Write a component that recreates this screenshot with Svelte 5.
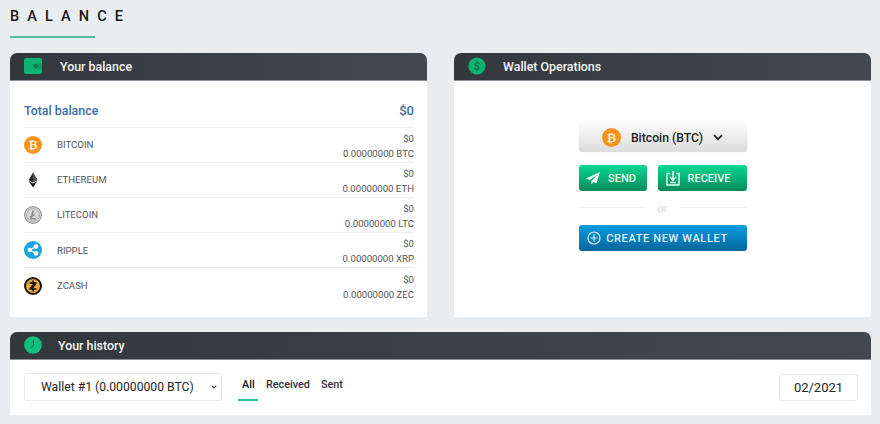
<script lang="ts">
	const coins = [
		{ name: 'BITCOIN', sym: 'BTC' },
		{ name: 'ETHEREUM', sym: 'ETH' },
		{ name: 'LITECOIN', sym: 'LTC' },
		{ name: 'RIPPLE', sym: 'XRP' },
		{ name: 'ZCASH', sym: 'ZEC' }
	];
</script>

{#snippet btc(size)}
	<svg width={size} height={size} viewBox="0 0 18 18">
		<circle cx="9" cy="9" r="9" fill="#f7931a" />
		<text x="9" y="13" text-anchor="middle" class="btc-mark">₿</text>
	</svg>
{/snippet}

<div class="page">
	<h1>BALANCE</h1>
	<div class="rule"></div>

	<div class="columns">
		<section class="card">
			<header>
				<svg class="head-icon" width="18" height="16" viewBox="0 0 18 16">
					<rect x="0" y="0" width="18" height="16" rx="2" fill="#0cb472" />
					<path d="M11 5.2h7v5.6h-7a2.8 2.8 0 0 1 0-5.6z" fill="#0a9f65" />
					<circle cx="12" cy="8" r="1.5" fill="none" stroke="#3a4148" stroke-width="0.8" />
				</svg>
				<h2 class="h-balance">Your balance</h2>
			</header>
			<div class="balance-body">
				<div class="total"><span>Total balance</span><span>$0</span></div>
				{#each coins as c}
					<div class="coin">
						<span class="coin-icon">
							{#if c.sym === 'BTC'}
								{@render btc(18)}
							{:else if c.sym === 'ETH'}
								<svg width="18" height="18" viewBox="0 0 18 18">
									<path d="M9 1.5 4.6 9 9 11.6 13.4 9z" fill="#2b2b2b" />
									<path d="M9 1.5V11.6L13.4 9z" fill="#555" />
									<path d="M4.6 9.9 9 16.5l4.4-6.6L9 12.5z" fill="#1a1a1a" />
								</svg>
							{:else if c.sym === 'LTC'}
								<svg width="18" height="18" viewBox="0 0 18 18">
									<circle cx="9" cy="9" r="8.4" fill="#d6d6d6" stroke="#8a8a8a" stroke-width="1" />
									<circle cx="9" cy="9" r="6.4" fill="none" stroke="#a5a5a5" stroke-width="0.8" />
									<path d="M8.2 4.4h2L9 9l1.9-.7-.4 1.3-1.9.7-.5 1.8h4.3l-.4 1.5H5.9l.8-2.7-1.3.5.3-1.2 1.4-.5z" fill="#8c8c8c" />
								</svg>
							{:else if c.sym === 'XRP'}
								<svg width="18" height="18" viewBox="0 0 18 18">
									<circle cx="9" cy="9" r="9" fill="#1ba5e6" />
									<path d="M6 9l6-3.4M6 9l6 3.4" stroke="#fff" stroke-width="1.2" />
									<circle cx="5.8" cy="9" r="2.3" fill="#fff" />
									<circle cx="12" cy="5.6" r="2.3" fill="#fff" />
									<circle cx="12" cy="12.4" r="2.3" fill="#fff" />
								</svg>
							{:else}
								<svg width="18" height="18" viewBox="0 0 18 18">
									<circle cx="9" cy="9" r="8" fill="#e8a93a" stroke="#17130c" stroke-width="2" />
									<path d="M8.2 3.6h1.6v1.7h2.7v1.6L9 11.2h3.5v1.6H9.8v1.6H8.2v-1.6H5.5v-1.6L9 6.9H5.6V5.3h2.6z" fill="#17130c" />
								</svg>
							{/if}
						</span>
						<span class="coin-name">{c.name}</span>
						<span class="coin-amount">
							<span>$0</span>
							<span>0.00000000 {c.sym}</span>
						</span>
					</div>
				{/each}
			</div>
		</section>

		<section class="card">
			<header>
				<svg class="head-icon" width="18" height="18" viewBox="0 0 18 18">
					<circle cx="9" cy="9" r="8.6" fill="#0cb472" />
					<text x="9" y="12.6" text-anchor="middle" class="dollar">$</text>
				</svg>
				<h2 class="h-wallet">Wallet Operations</h2>
			</header>
			<div class="ops-body">
				<div class="ops">
					<div class="coin-select">
						{@render btc(19)}
						<span>Bitcoin (BTC)</span>
						<svg width="10" height="7" viewBox="0 0 10 7">
							<path d="M1 1.2 5 5.2l4-4" fill="none" stroke="#222" stroke-width="1.7" />
						</svg>
					</div>
					<div class="pair">
						<div class="btn green send">
							<svg width="14" height="13" viewBox="0 0 14 13">
								<path d="M14 0 0 6.4l3.8 1.7L11 3 5.4 9v3.6l2.2-2.6 2.8 1.4z" fill="#e6fff4" />
							</svg>
							SEND
						</div>
						<div class="btn green receive">
							<svg width="14" height="15" viewBox="0 0 14 15">
								<path d="M4 2.5H1v11.5h12V2.5h-3" fill="none" stroke="#e6fff4" stroke-width="1.4" />
								<path d="M7 0v8M4 6l3 3.2L10 6M4 11.4h6" fill="none" stroke="#e6fff4" stroke-width="1.5" />
							</svg>
							RECEIVE
						</div>
					</div>
					<div class="or"><i></i><span>or</span><i></i></div>
					<div class="btn blue">
						<svg width="14" height="14" viewBox="0 0 14 14">
							<circle cx="7" cy="7" r="6" fill="none" stroke="#dff3ff" stroke-width="1.2" />
							<path d="M7 3.6v6.8M3.6 7h6.8" stroke="#dff3ff" stroke-width="1.2" />
						</svg>
						CREATE NEW WALLET
					</div>
				</div>
			</div>
		</section>
	</div>

	<section class="card history">
		<header>
			<svg class="head-icon" width="18" height="18" viewBox="0 0 18 18">
				<circle cx="9" cy="9" r="8.8" fill="#12bf7c" />
				<path d="M9.3 4v5.6L6.6 12" fill="none" stroke="#24524a" stroke-width="0.9" />
			</svg>
			<h2 class="h-history">Your history</h2>
		</header>
		<div class="history-body">
			<div class="wallet-select">
				<span>Wallet #1 (0.00000000 BTC)</span>
				<svg width="6" height="4" viewBox="0 0 8 5">
					<path d="M1 .8 4 3.8 7 .8" fill="none" stroke="#333" stroke-width="1.4" />
				</svg>
			</div>
			<nav>
				<span class="active">All</span>
				<span>Received</span>
				<span>Sent</span>
			</nav>
			<div class="date">02/2021</div>
		</div>
	</section>
</div>

<style>
	:global(body) {
		margin: 0;
		background: #e9edf0;
		font-family: Roboto, 'Liberation Sans', sans-serif;
	}

	.page {
		width: 880px;
		height: 424px;
		padding: 9px 9px 0 10px;
		box-sizing: border-box;
		overflow: hidden;
	}

	h1 {
		margin: 0;
		font-size: 14.5px;
		line-height: 15px;
		font-weight: 500;
		letter-spacing: 8.1px;
		color: #15181b;
	}

	.rule {
		width: 85px;
		height: 1.5px;
		margin-top: 12px;
		margin-bottom: 15px;
		background: #55bd9c;
	}

	.columns {
		display: grid;
		grid-template-columns: 417px 417px;
		column-gap: 27px;
	}

	.card {
		background: #fff;
		border-radius: 7px 7px 0 0;
	}

	header {
		display: flex;
		align-items: center;
		height: 28px;
		background: linear-gradient(90deg, #33383d, #414950);
		border-radius: 7px 7px 0 0;
		border-bottom: 1px solid #8a9196;
		box-sizing: border-box;
	}

	.head-icon {
		margin-left: 14px;
		flex: none;
	}

	h2 {
		margin: 0;
		font-size: 12.4px;
		font-weight: 500;
		color: #f2f4f5;
	}

	.h-balance {
		margin-left: 18px;
	}

	.h-wallet {
		margin-left: 17px;
	}

	.h-history {
		margin-left: 16px;
	}

	.balance-body {
		height: 236px;
		padding: 0 13px 0 14px;
		box-sizing: border-box;
	}

	.total {
		display: flex;
		justify-content: space-between;
		align-items: center;
		height: 47px;
		padding-top: 13px;
		font-size: 12.4px;
		font-weight: 500;
		color: #3a6ea5;
		border-bottom: 1px solid #ececec;
		box-sizing: border-box;
	}

	.total span:last-child {
		font-size: 13px;
	}

	.coin {
		display: flex;
		align-items: center;
		height: 35.2px;
		border-bottom: 1px solid #ececec;
		box-sizing: border-box;
		font-size: 9.6px;
		color: #555;
	}

	.coin:last-child {
		border-bottom: 0;
	}

	.coin-icon {
		display: flex;
		width: 33px;
	}

	.coin-name {
		flex: 1;
	}

	.coin-amount {
		display: flex;
		flex-direction: column;
		align-items: flex-end;
		gap: 2px;
		line-height: 13px;
		padding-top: 2px;
	}

	.btc-mark {
		font-family: 'DejaVu Sans', sans-serif;
		font-size: 11px;
		font-weight: 700;
		fill: #fff;
		opacity: 0.85;
	}

	.dollar {
		font-size: 11px;
		font-weight: 700;
		fill: #0a6f49;
	}

	.ops-body {
		height: 236px;
		display: flex;
		justify-content: center;
		align-items: flex-start;
		padding-top: 42px;
		box-sizing: border-box;
	}

	.ops {
		width: 168px;
		display: flex;
		flex-direction: column;
	}

	.coin-select {
		display: flex;
		align-items: center;
		justify-content: center;
		gap: 9.5px;
		height: 29px;
		padding-top: 1px;
		box-sizing: border-box;
		background: linear-gradient(#fbfbfb, #dcdcdc);
		border-radius: 3px;
		box-shadow: 0 0 1px rgba(0, 0, 0, 0.25);
		font-size: 12.2px;
		font-weight: 500;
		color: #1e2226;
	}

	.pair {
		display: grid;
		grid-template-columns: 68px 89px;
		column-gap: 11px;
		margin-top: 13px;
	}

	.btn {
		display: flex;
		align-items: center;
		justify-content: center;
		height: 26px;
		padding-top: 1px;
		border-radius: 3px;
		color: #e6fff4;
		font-size: 11px;
		font-weight: 500;
		box-sizing: border-box;
	}

	.green {
		background: linear-gradient(#08d992, #078a5b);
		gap: 8px;
	}

	.send {
		padding-right: 3px;
	}

	.receive {
		padding-right: 8px;
	}

	.blue {
		background: linear-gradient(#0a9be0, #06669c);
		color: #dff3ff;
		gap: 5px;
		letter-spacing: 0.65px;
		font-size: 11px;
		padding-right: 10px;
	}

	.or {
		display: flex;
		align-items: center;
		gap: 11px;
		height: 34px;
		font-size: 11.5px;
		color: #d8d8d8;
	}

	.or i {
		flex: 1;
		height: 1px;
		background: #efefef;
	}

	.history {
		margin-top: 15px;
		width: 861px;
	}

	.history-body {
		display: flex;
		align-items: center;
		height: 55px;
		padding: 0 13px 0 14px;
		box-sizing: border-box;
	}

	.wallet-select {
		display: flex;
		align-items: center;
		justify-content: space-between;
		width: 198px;
		height: 28px;
		padding: 0 4px 0 16px;
		box-sizing: border-box;
		border: 1px solid #e6e8ea;
		border-radius: 3px;
		font-size: 12.2px;
		color: #22262a;
	}

	nav {
		display: flex;
		flex: 1;
		margin-left: 16px;
		align-self: flex-start;
		font-size: 10.8px;
		font-weight: 500;
		color: #2e3236;
		padding-top: 18px;
		gap: 11px;
	}

	nav span {
		height: 21px;
	}

	nav .active {
		padding: 0 4px;
		width: 12px;
		margin-right: -3px;
		text-align: center;
		border-bottom: 2px solid #2bbf97;
		color: #15181b;
	}

	.date {
		display: flex;
		align-items: center;
		justify-content: center;
		width: 79px;
		height: 27px;
		border: 1px solid #e6e8ea;
		border-radius: 3px;
		font-size: 13px;
		color: #22262a;
		box-sizing: border-box;
	}
</style>
